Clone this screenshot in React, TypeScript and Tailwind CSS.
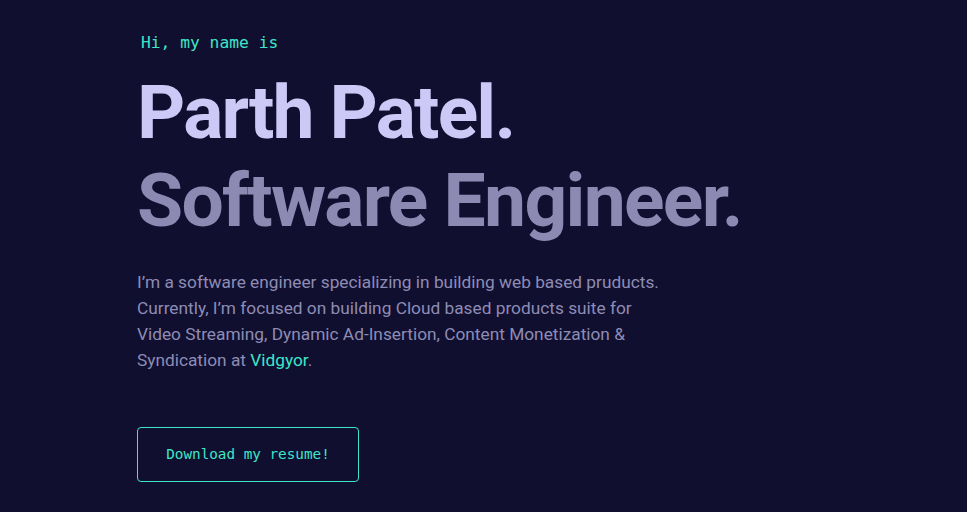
export default function App() {
  return (
    <div className="min-h-screen w-full bg-[#100f30] font-['Roboto',sans-serif]">
      <section className="flex flex-col items-start pl-[137px] pt-[30px]">
        <h1 className="ml-[4px] font-['DejaVu_Sans_Mono',monospace] text-[16.3px] leading-[26px] text-[#3ee6c7]">
          Hi, my name is
        </h1>
        <h2 className="mt-[12px] text-[75px] font-bold leading-[88px] tracking-[-1.8px] text-[#ccc9f6]">
          Parth Patel.
        </h2>
        <h3 className="text-[75px] font-bold leading-[88px] tracking-[-1.7px] text-[#8c8ab3]">
          Software Engineer.
        </h3>
        <p className="mt-[25px] max-w-[560px] text-[17.3px] leading-[26px] text-[#8e8cb4]">
          I’m a software engineer specializing in building web based pruducts.
          <br />
          Currently, I’m focused on building Cloud based products suite for
          <br />
          Video Streaming, Dynamic Ad-Insertion, Content Monetization &amp;
          <br />
          Syndication at{' '}
          <a href="#" className="text-[#3ee6c7]">
            Vidgyor
          </a>
          .
        </p>
        <a
          href="#"
          className="mt-[54px] flex h-[55px] w-[222px] items-center justify-center rounded-[4px] border border-[#3ee6c7] pt-[1px] font-['DejaVu_Sans_Mono',monospace] text-[14.3px] text-[#3ee6c7]"
        >
          Download my resume!
        </a>
      </section>
    </div>
  )
}
